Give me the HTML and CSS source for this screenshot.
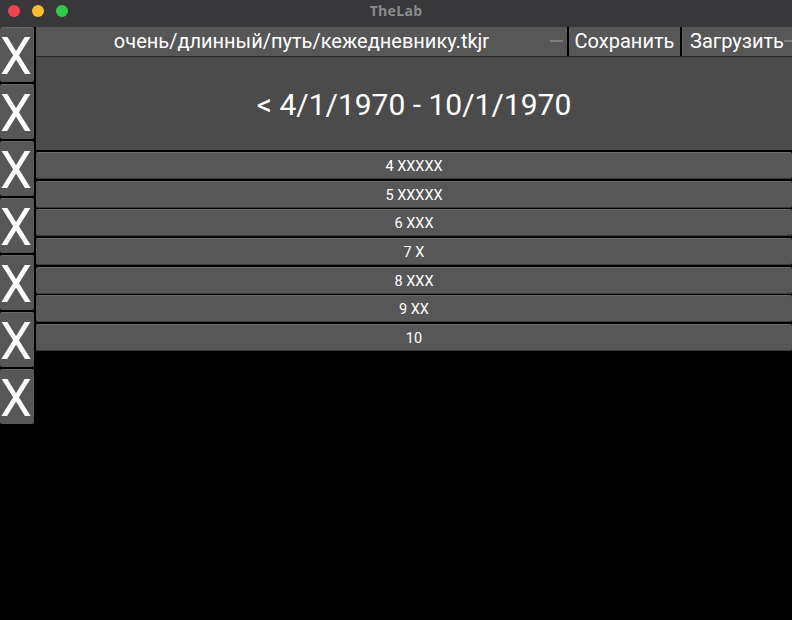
FILE: index.html
```html
<!DOCTYPE html>
<html>
<head>
<meta charset="utf-8">
<link rel="stylesheet" href="styles.css">
</head>
<body>
<div class="titlebar">
  <div class="lights">
    <span class="light red"></span>
    <span class="light yellow"></span>
    <span class="light green"></span>
  </div>
  <div class="title">TheLab</div>
</div>
<div class="main">
  <div class="side">
    <div class="xbtn">X</div>
    <div class="xbtn">X</div>
    <div class="xbtn">X</div>
    <div class="xbtn">X</div>
    <div class="xbtn">X</div>
    <div class="xbtn">X</div>
    <div class="xbtn">X</div>
  </div>
  <div class="content">
    <div class="topbar">
      <div class="path">очень/длинный/путь/кежедневнику.tkjr<span class="dash"></span></div>
      <div class="tbtn">Сохранить</div>
      <div class="tbtn last">Загрузить<span class="dash"></span></div>
    </div>
    <div class="header">&lt; 4/1/1970 - 10/1/1970</div>
    <div class="rows">
      <div class="row">4 XXXXX</div>
      <div class="row">5 XXXXX</div>
      <div class="row">6 XXX</div>
      <div class="row">7 X</div>
      <div class="row">8 XXX</div>
      <div class="row">9 XX</div>
      <div class="row">10</div>
    </div>
  </div>
</div>
</body>
</html>
```

FILE: styles.css
```css
html, body {
  margin: 0;
  padding: 0;
  background: #000;
  width: 792px;
  height: 620px;
  overflow: hidden;
  font-family: Roboto, "Liberation Sans", sans-serif;
  color: #fff;
}
.titlebar {
  height: 27px;
  background: #38383b;
  position: relative;
  display: flex;
  align-items: center;
  justify-content: center;
}
.lights {
  position: absolute;
  left: 8px;
  top: 5px;
  display: flex;
  gap: 12px;
}
.light {
  width: 12px;
  height: 12px;
  border-radius: 50%;
  display: block;
}
.red { background: #f0434f; }
.yellow { background: #f9bc2f; }
.green { background: #30cb48; }
.title {
  font-family: "Open Sans", "DejaVu Sans", sans-serif;
  font-weight: 700;
  font-size: 14px;
  letter-spacing: 0.3px;
  color: #8b8b8d;
  margin-top: -6px;
}
.main {
  display: flex;
  gap: 2px;
}
.side {
  width: 34px;
  display: flex;
  flex-direction: column;
  gap: 2px;
}
.xbtn {
  height: 55px;
  background: #575757;
  border-top: 1px solid #666;
  border-radius: 2px;
  font-size: 51px;
  line-height: 58px;
  text-align: center;
  padding-right: 5px;
  box-sizing: border-box;
}
.content {
  flex: 1;
  display: flex;
  flex-direction: column;
}
.topbar {
  height: 29px;
  display: flex;
  background: #000;
  gap: 2px;
  border-bottom: 1px solid #2a2a2a;
}
.path {
  flex: 1;
  background: #575757;
  font-size: 20px;
  line-height: 29px;
  text-align: center;
  position: relative;
}
.tbtn {
  width: 111px;
  background: #575757;
  font-size: 20px;
  line-height: 29px;
  text-align: center;
  position: relative;
}
.tbtn.last {
  width: 110px;
}
.dash {
  position: absolute;
  right: 4px;
  top: 13px;
  width: 13px;
  height: 2px;
  background: #7e7e7e;
}
.tbtn .dash {
  right: 0;
  width: 8px;
}
.header {
  height: 93px;
  background: #4b4b4b;
  font-size: 30px;
  line-height: 95px;
  text-align: center;
  border-bottom: 1px solid #000;
}
.rows {
  margin-top: 1px;
  display: flex;
  flex-direction: column;
  gap: 1.67px;
}
.row {
  height: 27px;
  box-sizing: border-box;
  background: #575757;
  border-top: 1px solid #6a6a6a;
  border-bottom: 1px solid #3c3c3c;
  border-radius: 2px;
  font-size: 14.5px;
  line-height: 28px;
  text-align: center;
}
```
